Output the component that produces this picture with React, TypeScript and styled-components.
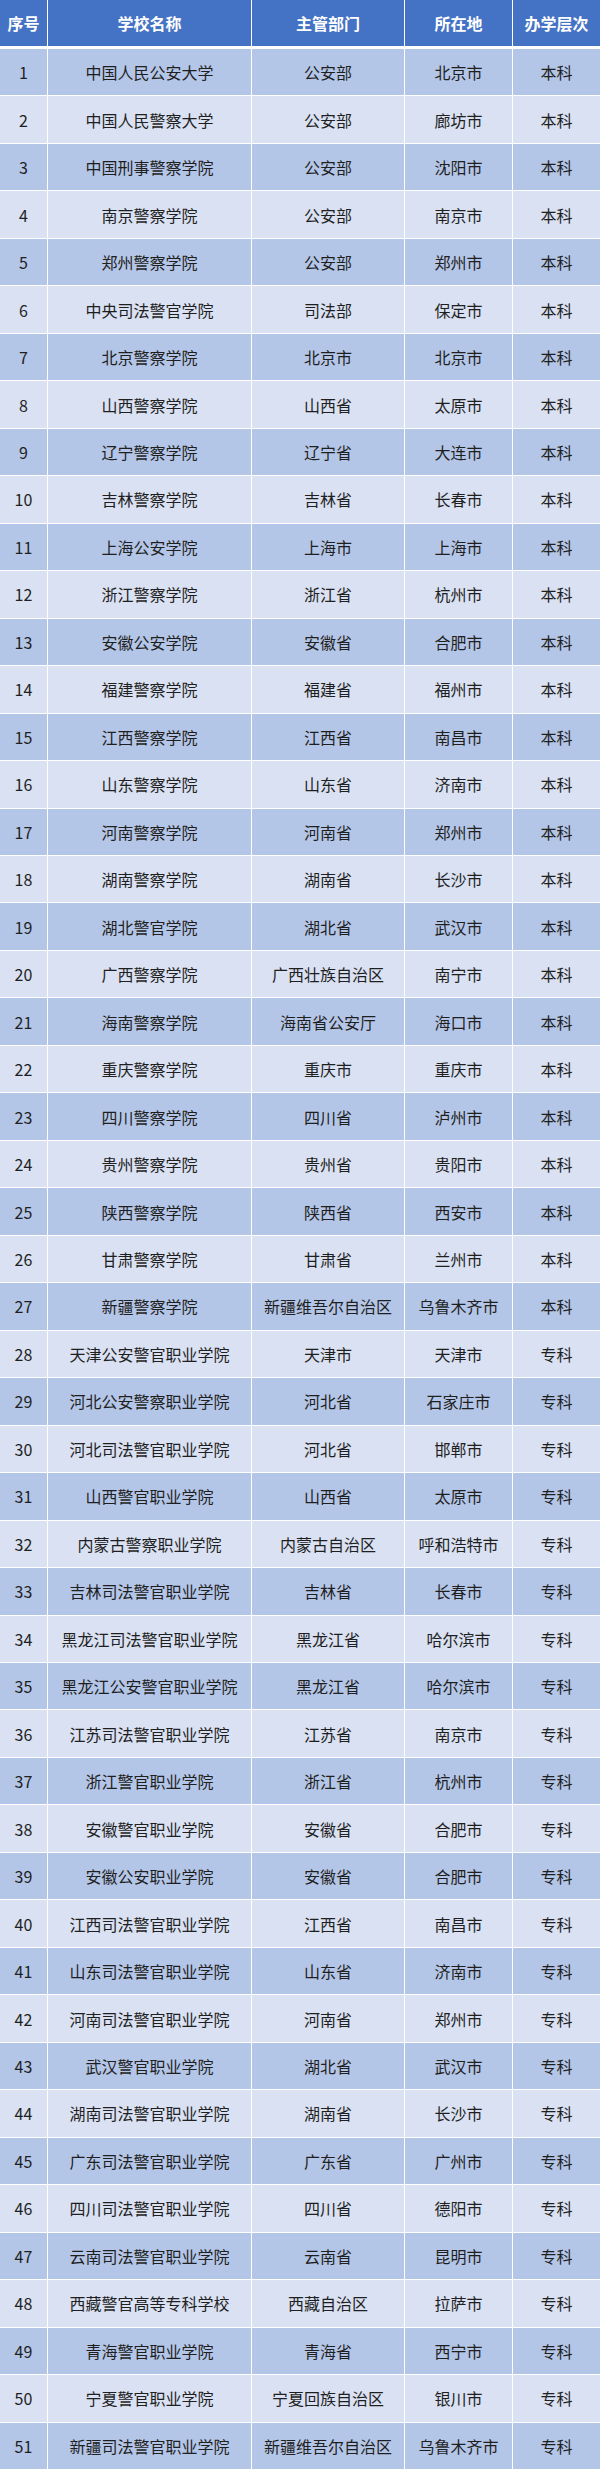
import * as React from "react";
import styled, { createGlobalStyle } from "styled-components";

const GlobalStyle = createGlobalStyle`
  html, body {
    margin: 0;
    padding: 0;
    background: #ffffff;
  }
  body {
    font-family: "Noto Sans CJK SC", "Noto Sans", sans-serif;
  }
`;

const COLUMNS = "47px 203px 152px 107px 1fr";

const raw = `中国人民公安大学,公安部,北京市,本科
中国人民警察大学,公安部,廊坊市,本科
中国刑事警察学院,公安部,沈阳市,本科
南京警察学院,公安部,南京市,本科
郑州警察学院,公安部,郑州市,本科
中央司法警官学院,司法部,保定市,本科
北京警察学院,北京市,北京市,本科
山西警察学院,山西省,太原市,本科
辽宁警察学院,辽宁省,大连市,本科
吉林警察学院,吉林省,长春市,本科
上海公安学院,上海市,上海市,本科
浙江警察学院,浙江省,杭州市,本科
安徽公安学院,安徽省,合肥市,本科
福建警察学院,福建省,福州市,本科
江西警察学院,江西省,南昌市,本科
山东警察学院,山东省,济南市,本科
河南警察学院,河南省,郑州市,本科
湖南警察学院,湖南省,长沙市,本科
湖北警官学院,湖北省,武汉市,本科
广西警察学院,广西壮族自治区,南宁市,本科
海南警察学院,海南省公安厅,海口市,本科
重庆警察学院,重庆市,重庆市,本科
四川警察学院,四川省,泸州市,本科
贵州警察学院,贵州省,贵阳市,本科
陕西警察学院,陕西省,西安市,本科
甘肃警察学院,甘肃省,兰州市,本科
新疆警察学院,新疆维吾尔自治区,乌鲁木齐市,本科
天津公安警官职业学院,天津市,天津市,专科
河北公安警察职业学院,河北省,石家庄市,专科
河北司法警官职业学院,河北省,邯郸市,专科
山西警官职业学院,山西省,太原市,专科
内蒙古警察职业学院,内蒙古自治区,呼和浩特市,专科
吉林司法警官职业学院,吉林省,长春市,专科
黑龙江司法警官职业学院,黑龙江省,哈尔滨市,专科
黑龙江公安警官职业学院,黑龙江省,哈尔滨市,专科
江苏司法警官职业学院,江苏省,南京市,专科
浙江警官职业学院,浙江省,杭州市,专科
安徽警官职业学院,安徽省,合肥市,专科
安徽公安职业学院,安徽省,合肥市,专科
江西司法警官职业学院,江西省,南昌市,专科
山东司法警官职业学院,山东省,济南市,专科
河南司法警官职业学院,河南省,郑州市,专科
武汉警官职业学院,湖北省,武汉市,专科
湖南司法警官职业学院,湖南省,长沙市,专科
广东司法警官职业学院,广东省,广州市,专科
四川司法警官职业学院,四川省,德阳市,专科
云南司法警官职业学院,云南省,昆明市,专科
西藏警官高等专科学校,西藏自治区,拉萨市,专科
青海警官职业学院,青海省,西宁市,专科
宁夏警官职业学院,宁夏回族自治区,银川市,专科
新疆司法警官职业学院,新疆维吾尔自治区,乌鲁木齐市,专科`;

const schools = raw.split("\n").map((line) => line.split(","));

const App: React.FC = () => {
  return (
    <>
      <GlobalStyle />
      <StyledTable>
        <StyledHeader>
          <StyledHeadCell>序号</StyledHeadCell>
          <StyledHeadCell>学校名称</StyledHeadCell>
          <StyledHeadCell>主管部门</StyledHeadCell>
          <StyledHeadCell>所在地</StyledHeadCell>
          <StyledHeadCell>办学层次</StyledHeadCell>
        </StyledHeader>
        <StyledBody>
          {schools.map((row, i) => (
            <StyledRow key={i}>
              <StyledCell shade={i % 2 === 0}>{i + 1}</StyledCell>
              {row.map((text, j) => (
                <StyledCell key={j} shade={i % 2 === 0}>
                  {text}
                </StyledCell>
              ))}
            </StyledRow>
          ))}
        </StyledBody>
      </StyledTable>
    </>
  );
};

export default App;

const StyledTable = styled.div`
  width: 600px;
  height: 2469px;
  display: flex;
  flex-direction: column;
  background: #ffffff;
`;

const StyledHeader = styled.div`
  height: 46px;
  flex-shrink: 0;
  display: grid;
  grid-template-columns: ${COLUMNS};
  column-gap: 1px;
  margin-bottom: 3px;
`;

const StyledHeadCell = styled.div`
  background: #4472c4;
  color: #ffffff;
  font-weight: 700;
  font-size: 16px;
  display: flex;
  align-items: center;
  justify-content: center;
  white-space: nowrap;
`;

const StyledBody = styled.div`
  flex: 1;
  display: grid;
  grid-template-rows: repeat(51, 1fr);
  row-gap: 1px;
`;

const StyledRow = styled.div`
  display: grid;
  grid-template-columns: ${COLUMNS};
  column-gap: 1px;
`;

const StyledCell = styled.div<{ shade: boolean }>`
  background: ${(props) => (props.shade ? "#b4c6e7" : "#d9e1f2")};
  color: #1f1f1f;
  font-size: 16px;
  display: flex;
  align-items: center;
  justify-content: center;
  white-space: nowrap;
`;
